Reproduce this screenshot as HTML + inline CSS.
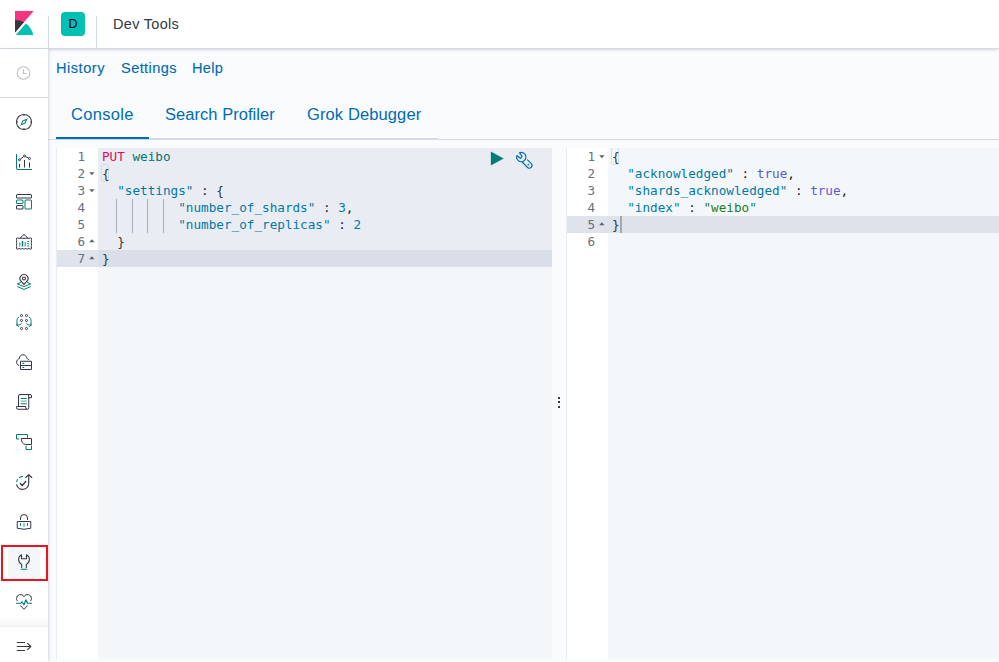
<!DOCTYPE html>
<html lang="en">
<head>
<meta charset="utf-8">
<title>Dev Tools - Kibana</title>
<style>
*{box-sizing:border-box;margin:0;padding:0}
html,body{width:999px;height:662px;overflow:hidden;background:#fafbfd;font-family:"Liberation Sans",sans-serif;color:#343741}
.abs{position:absolute}
#header{position:absolute;left:0;top:0;width:999px;height:49px;background:#fff;border-bottom:1px solid #d3dae6;box-shadow:0 2px 2px -1px rgba(152,162,179,.3),0 1px 5px -2px rgba(152,162,179,.3);z-index:5}
.vsep{position:absolute;top:16px;width:1px;height:32px;background:#d3dae6}
#avatar{position:absolute;left:61px;top:12px;width:24px;height:24px;border-radius:4px;background:#00bfb3;color:#000;font-size:12.5px;font-weight:400;line-height:24px;text-align:center}
#title{position:absolute;left:113px;top:15px;font-size:14px;line-height:18px;letter-spacing:.3px;transform:scaleX(1.035);transform-origin:0 0;white-space:nowrap;color:#343741}
#nav{position:absolute;left:0;top:49px;width:48px;height:613px;background:#fff;box-shadow:2px 0 2px -1px rgba(152,162,179,.3),1px 0 5px -2px rgba(152,162,179,.3);z-index:6}
#nav .hline{position:absolute;left:0;width:48px;height:1px;background:#d3dae6}
.ico{position:absolute;left:16px;width:16px;height:16px;overflow:visible}
#active{position:absolute;left:8px;top:497.5px;width:32px;height:32.5px;border-radius:4px;background:#f3f7fa}
#redbox{position:absolute;left:1px;top:496px;width:47px;height:36px;border:2px solid #ec1220}
#collapse{position:absolute;left:0;top:578px;width:48px;height:35px;background:#fff}#cshadow{position:absolute;left:0;top:564px;width:48px;height:14px;background:linear-gradient(to bottom,rgba(152,162,179,0) 0%,rgba(152,162,179,.02) 40%,rgba(152,162,179,.07) 75%,rgba(152,162,179,.17) 100%)}
.menu{position:absolute;top:58.5px;font-size:14px;line-height:18px;letter-spacing:.5px;transform:scaleX(1.04);transform-origin:0 0;-webkit-text-stroke:.12px #006bb4;color:#006bb4;white-space:nowrap}
.tab{position:absolute;top:104px;font-size:16px;line-height:22px;letter-spacing:.3px;transform:scaleX(1.03);transform-origin:0 0;color:#006bb4;white-space:nowrap}
#tabline1{position:absolute;left:56px;top:138px;width:382px;height:1px;background:#d3dae6}
#tabline2{position:absolute;left:48px;top:139px;width:951px;height:1px;background:#d3dae6}
#tabsel{position:absolute;left:56px;top:137px;width:93px;height:2px;background:#006bb4}
.ed{position:absolute;top:148px;height:511px;background:#f4f7fa;overflow:hidden;font-family:"DejaVu Sans Mono","Liberation Mono",monospace;font-size:12.66px;line-height:17px}
.gut{position:absolute;left:0;top:0;width:42px;height:100%;background:#fff;border-left:1px solid #e8ecf3}
.ln{position:absolute;left:0;width:42px;height:17px;color:#69707d;text-align:right;padding-right:14px;white-space:pre}
.row{position:absolute;left:46px;height:17px;white-space:pre;color:#1a1c21}
.hl{position:absolute;left:0;right:0;height:17px}
.v{color:#0079a5}.m{color:#e00b60}.u{color:#00756c}.k{color:#5a5ad9}.s{color:#1c7c1c}.p{color:#343741}
.fold{position:absolute;width:0;height:0;border-left:2.7px solid transparent;border-right:2.7px solid transparent;margin-left:1.3px}
.fd{border-top:3.2px solid #62656b}
.fu{border-bottom:3.2px solid #62656b}
.guide{position:absolute;width:1px;background:#a9afba}.brk{position:absolute;width:8px;height:17.5px;border:1px solid #d6dbe5;border-radius:3px}
</style>
</head>
<body>
<div id="header">
  <svg class="abs" style="left:12px;top:11px" width="24" height="24" viewBox="0 0 32 32"><polygon fill="#f8337f" points="4 0 4 28.789 28.935 .017"/><path fill="#343741" d="M4,12 L4,28.789 L15.906,15.051 C12.368,13.115 8.317,12 4,12"/><path fill="#00BFB3" d="M18.4789,16.6641 L6.2679,30.7551 L5.1889,31.9991 L28.4399,31.9991 C27.1649,25.7131 23.5519,20.2901 18.4789,16.6641"/></svg>
  <div class="vsep" style="left:48px"></div>
  <div id="avatar">D</div>
  <div class="vsep" style="left:96px"></div>
  <div id="title">Dev Tools</div>
</div>
<div id="nav">
    <svg class="ico" style="top:15.5px" viewBox="0 0 16 16"><g fill="none" stroke="#bbbcc0" stroke-width="1.05"><circle cx="7.5" cy="8" r="6.3"/><path d="M7.5 4.2V8.5H10.5"/></g></svg>
  <div class="hline" style="top:48px"></div>
  <!-- discover -->
  <svg class="ico" style="top:65px" viewBox="0 0 32 32"><path fill="#017d73" d="M8.33 23.67l4.79-10.55 10.55-4.79-4.79 10.55-10.55 4.79zm6.3-9l-2.28 5 5-2.28 2.28-5-5 2.28z"/><path fill="#343741" d="M16 0C7.163 0 0 7.163 0 16s7.163 16 16 16 16-7.163 16-16A16 16 0 0 0 16 0zm1 29.95V28h-2v1.95A14 14 0 0 1 2.05 17H4v-2H2.05A14 14 0 0 1 15 2.05V4h2V2.05A14 14 0 0 1 29.95 15H28v2h1.95A14 14 0 0 1 17 29.95z"/></svg>
  <!-- visualize -->
  <svg class="ico" style="top:105px" viewBox="0 0 32 32"><path fill="#017d73" d="M32 32H4a4 4 0 0 1-4-4V0h2v28a2 2 0 0 0 2 2h28v2z"/><path fill="#343741" d="M6 20h2v7H6zM16 12h2v15h-2zM26 17h2v10h-2z"/><g fill="none" stroke="#343741" stroke-width="2"><circle cx="7" cy="11.5" r="2"/><circle cx="17" cy="4" r="2"/><circle cx="27" cy="9" r="2"/><path d="M8.8 10.2L15.2 5.4M19 5l6.2 3.1"/></g></svg>
  <!-- dashboard -->
  <svg class="ico" style="top:145px" viewBox="0 0 32 32"><path fill="#343741" d="M29 9H3a3 3 0 0 1-3-3V3a3 3 0 0 1 3-3h26a3 3 0 0 1 3 3v3a3 3 0 0 1-3 3zM3 2a1 1 0 0 0-1 1v3a1 1 0 0 0 1 1h26a1 1 0 0 0 1-1V3a1 1 0 0 0-1-1H3z"/><path fill="#017d73" d="M12 20H3a3 3 0 0 1-3-3v-3a3 3 0 0 1 3-3h9a3 3 0 0 1 3 3v3a3 3 0 0 1-3 3zm-9-7a1 1 0 0 0-1 1v3a1 1 0 0 0 1 1h9a1 1 0 0 0 1-1v-3a1 1 0 0 0-1-1H3z"/><path fill="#343741" d="M12 31H3a3 3 0 0 1-3-3v-3a3 3 0 0 1 3-3h9a3 3 0 0 1 3 3v3a3 3 0 0 1-3 3zm-9-7a1 1 0 0 0-1 1v3a1 1 0 0 0 1 1h9a1 1 0 0 0 1-1v-3a1 1 0 0 0-1-1H3z"/><path fill="#017d73" d="M29 31h-9a3 3 0 0 1-3-3V14a3 3 0 0 1 3-3h9a3 3 0 0 1 3 3v14a3 3 0 0 1-3 3zm-9-18a1 1 0 0 0-1 1v14a1 1 0 0 0 1 1h9a1 1 0 0 0 1-1V14a1 1 0 0 0-1-1h-9z"/></svg>
  <!-- canvas -->
  <svg class="ico" style="top:185px" viewBox="0 0 32 32"><g fill="none" stroke="#343741" stroke-width="2" stroke-linejoin="round"><path d="M1 8.5 q1.5 -1.6 3 0 H28 q1.5 -1.6 3 0 V11 q-1.2 1.5 0 3 v3 q-1.2 1.5 0 3 v3 q-1.2 1.5 0 3 V29.5 q-1.5 1.6 -3 0 h-4 q-1.5 1.2 -3 0 h-3.5 q-1.5 1.2 -3 0 h-3.5 q-1.5 1.2 -3 0 H4 q-1.5 1.6 -3 0 V26 q1.2 -1.5 0 -3 v-3 q1.2 -1.5 0 -3 v-3 q1.2 -1.5 0 -3 Z"/><path d="M8 8.5 L14.2 2.3 a2.5 2.5 0 0 1 3.6 0 L24 8.5"/></g><g fill="#017d73"><rect x="6" y="17" width="3" height="8" opacity=".6"/><rect x="11.5" y="14" width="3" height="11"/><rect x="17" y="16" width="3" height="9" opacity=".6"/><rect x="22.5" y="14" width="3.5" height="2"/><rect x="22.5" y="18.5" width="3.5" height="2"/><rect x="22.5" y="23" width="3.5" height="2"/></g></svg>
  <!-- maps -->
  <svg class="ico" style="top:225px" viewBox="0 0 32 32"><g fill="none" stroke="#017d73" stroke-width="2" stroke-linejoin="round"><path d="M9.5 16.8 L2.5 19.8 L16 25.2 L29.5 19.8 L22.5 16.8"/><path d="M2.5 25 L16 30.8 L29.5 25"/></g><g fill="#fff" stroke="#343741" stroke-width="2.2" stroke-linejoin="round"><path d="M16 20.8 L10.04 14.33 A8 8 0 1 1 21.96 14.33 Z"/><circle cx="16" cy="9" r="3" fill="none"/></g></svg>
  <!-- ml -->
  <svg class="ico" style="top:265px" viewBox="0 0 32 32"><g fill="none" stroke="#343741" stroke-width="2"><circle cx="11" cy="3" r="2.1"/><circle cx="21" cy="3" r="2.1"/><circle cx="11" cy="13" r="2.1"/><circle cx="21" cy="13" r="2.1"/><circle cx="11" cy="29" r="2.1"/><circle cx="21" cy="29" r="2.1"/></g><g fill="none" stroke="#017d73" stroke-width="1.9" stroke-linecap="round" stroke-linejoin="round"><path d="M5.5 6.5 Q2 8 2 12 V23 M11 19.5 Q9 22.5 3 22.5 M1.5 20 L2.5 23 L5.5 25.5"/><path d="M26.5 6.5 Q30 8 30 12 V23 M21 19.5 Q23 22.5 29 22.5 M30.5 20 L29.5 23 L26.5 25.5"/></g></svg>
  <!-- infra -->
  <svg class="ico" style="top:305px" viewBox="0 0 32 32"><g fill="none" stroke="#343741" stroke-width="2" stroke-linejoin="round"><path stroke-linecap="round" d="M5.8 23 C3 22 1.2 19.5 1.2 16.5 C1.2 13 3.5 10 6.8 9 C6.5 4.5 10 1.5 14 1.5 C17.5 1.5 20.2 3.5 21.2 7 C21.8 9.3 23.5 10.8 25.7 11.2"/><rect x="9" y="14.5" width="22" height="8.5"/><rect x="9" y="23" width="22" height="8"/></g><g fill="#017d73"><rect x="12.5" y="17.7" width="4" height="2.2" rx="1"/><rect x="12.5" y="26" width="4" height="2.2" rx="1"/></g></svg>
  <!-- logs -->
  <svg class="ico" style="top:345px" viewBox="0 0 32 32"><g fill="none" stroke="#343741" stroke-width="2" stroke-linejoin="round"><path d="M5 25 V4 a3 3 0 0 1 3 -3 H28 M28 1 a3 3 0 0 1 3 3 V7.5 H25.5 M25.5 4 a3 3 0 0 0 -3 -3 M25.5 4 V27.5 a3 3 0 0 1 -3 3 H4 a3 3 0 0 1 -3 -3 V25 H19.5 V27.5 a3 3 0 0 0 3 3"/></g><g fill="#017d73"><rect x="9.5" y="8" width="12" height="2"/><rect x="9.5" y="13" width="12" height="2.5" opacity=".55"/><rect x="9.5" y="18.5" width="12" height="2"/></g></svg>
  <!-- apm -->
  <svg class="ico" style="top:385px" viewBox="0 0 32 32"><g fill="none" stroke-width="2" stroke-linejoin="miter"><path stroke="#017d73" d="M6.5 10 H1 V1 H23 V7.5"/><path stroke="#017d73" d="M20 23 V31 H31 V23"/><path stroke="#343741" d="M10.5 9 H31 V21 H19 Q11 20 10.5 9 Z" stroke-linejoin="round"/></g></svg>
  <!-- uptime -->
  <svg class="ico" style="top:425px" viewBox="0 0 32 32"><g fill="none" stroke-width="2" stroke-linecap="round" stroke-linejoin="round"><path stroke="#343741" stroke-width="2.2" d="M1.3 21.5 A12.3 12.3 0 0 0 25.5 18.7 V2 M19.5 7 L25.5 1.2 L31.5 7"/><path stroke="#343741" stroke-width="2.5" d="M8.5 19 L12.5 23 L19.5 15"/><path stroke="#017d73" stroke-width="2.1" d="M1.4 15.5 Q1.8 13 3 11 M7 7 Q9.5 5.5 13 5.2"/></g></svg>
  <!-- siem -->
  <svg class="ico" style="top:465px" viewBox="0 0 32 32"><g fill="none" stroke="#343741" stroke-width="2" stroke-linejoin="miter"><path d="M9 11 V8 a7 7 0 0 1 14 0 V11" stroke-linecap="round"/><path d="M2.5 15 H29.5 V28.5 Q16 32.5 2.5 28.5 Z"/></g><g fill="#017d73"><rect x="8" y="18" width="2" height="6" rx="1"/><rect x="14.5" y="18" width="3" height="8" opacity=".55"/><rect x="22" y="18" width="2" height="6" rx="1"/></g></svg>
  <!-- devtools -->
  <div id="active"></div>
  <svg class="ico" style="top:505px" viewBox="0 0 32 32"><g fill="none" stroke-width="2.15" stroke-linejoin="round"><path stroke="#343741" d="M11.4 28 V20.8 A10.8 10.8 0 0 1 11.1 1.4 V9.5 H20.9 V1.4 A10.8 10.8 0 0 1 20.6 20.8 V28"/><path stroke="#017d73" stroke-linecap="round" d="M10.5 30.4 H21.5"/></g></svg>
  <div id="redbox"></div>
  <!-- monitoring -->
  <svg class="ico" style="top:545px" viewBox="0 0 32 32"><g fill="none" stroke-width="2" stroke-linecap="round" stroke-linejoin="round"><path stroke="#343741" d="M2.5 13.5 A7.6 7.6 0 0 1 1 9 A8 8 0 0 1 16 5.2 A8 8 0 0 1 31 9 A7.6 7.6 0 0 1 29.5 13.5 M9 23.5 L16 30.5 L23 23.5"/><path stroke="#017d73" stroke-width="2.4" stroke-linecap="butt" d="M0 18.5 H10 L12 15.5 L16 21.5 L20 11.5 L23 18.5 H32"/></g></svg>
  <!-- collapse -->
  <div id="cshadow"></div><div id="collapse"><svg class="abs" style="left:16px;top:12px;overflow:visible" width="16" height="16" viewBox="0 0 16 16"><g fill="none" stroke="#343741" stroke-width="1.1" stroke-linecap="round" stroke-linejoin="round"><path d="M1.2 3.5 H8.6 M1.2 7.5 H14.6 M1.2 11.5 H8.6 M11.6 4.4 L14.8 7.5 L11.6 10.6"/></g></svg></div>

</div>
<div class="menu" style="left:56px">History</div>
<div class="menu" style="left:121px;letter-spacing:.4px">Settings</div>
<div class="menu" style="left:192.3px;letter-spacing:.3px">Help</div>
<div class="tab" style="left:71.3px">Console</div>
<div class="tab" style="left:164.6px;letter-spacing:.05px">Search Profiler</div>
<div class="tab" style="left:307px;letter-spacing:.12px">Grok Debugger</div>
<div id="tabline1"></div><div id="tabline2"></div><div id="tabsel"></div>
<div class="ed" id="ed1" style="left:56px;width:496px">
  <div class="hl" style="top:0;height:119px;background:#e9edf3"></div>
  <div class="hl" style="top:102px;background:#d9dee8"></div>
  <div class="gut">
    <div class="hl" style="top:102px;background:#dfe3ec"></div>
    <div class="ln" style="top:0">1</div>
    <div class="ln" style="top:17px">2</div>
    <div class="ln" style="top:34px">3</div>
    <div class="ln" style="top:51px">4</div>
    <div class="ln" style="top:68px">5</div>
    <div class="ln" style="top:85px">6</div>
    <div class="ln" style="top:102px">7</div>
    <svg class="abs" style="left:32.2px;top:24px" width="6" height="4" viewBox="0 0 6 4"><polygon points="0.2,0.2 5.6,0.2 2.9,3.3" fill="#5f6268"/></svg>
    <svg class="abs" style="left:32.2px;top:41px" width="6" height="4" viewBox="0 0 6 4"><polygon points="0.2,0.2 5.6,0.2 2.9,3.3" fill="#5f6268"/></svg>
    <svg class="abs" style="left:32.2px;top:91px" width="6" height="4" viewBox="0 0 6 4"><polygon points="0.2,3.3 5.6,3.3 2.9,0.2" fill="#5f6268"/></svg>
    <svg class="abs" style="left:32.2px;top:108px" width="6" height="4" viewBox="0 0 6 4"><polygon points="0.2,3.3 5.6,3.3 2.9,0.2" fill="#5f6268"/></svg>
  </div>
  <div class="guide" style="left:60.4px;top:51px;height:34px"></div>
  <div class="guide" style="left:75.8px;top:51px;height:34px"></div>
  <div class="guide" style="left:91.2px;top:51px;height:34px"></div>
  <div class="guide" style="left:106.6px;top:51px;height:34px"></div>
  <div class="row" style="top:0"><span class="m">PUT</span> <span class="u">weibo</span></div>
  <div class="brk" style="left:45px;top:16px"></div><div class="row" style="top:17px"><span class="p">{</span></div>
  <div class="row" style="top:34px">  <span class="v">"settings"</span> : <span class="p">{</span></div>
  <div class="row" style="top:51px">          <span class="v">"number_of_shards"</span> : <span class="v">3</span>,</div>
  <div class="row" style="top:68px">          <span class="v">"number_of_replicas"</span> : <span class="v">2</span></div>
  <div class="row" style="top:85px">  <span class="p">}</span></div>
  <div class="row" style="top:102px"><span class="p">}</span></div>
  <svg class="abs" style="left:434px;top:2.7px" width="14" height="15" viewBox="0 0 14 15"><path d="M1 0.8 L13.4 7.5 L1 14.2 Z" fill="#017d73" stroke="#017d73" stroke-width=".3" stroke-linejoin="round"/></svg>
  <svg class="abs" style="left:459.8px;top:3.7px;overflow:visible" width="16" height="16" viewBox="0 0 16 16"><g fill="none" stroke="#006bb4" stroke-width="1.15" stroke-linejoin="round" stroke-linecap="round"><path d="M3.5 0.8 A4.65 4.65 0 1 1 0.9 3.5 L4.5 6.5 L6.1 4.4 Z"/><path d="M11.5 7.9 L15.4 11.7 A2.7 2.7 0 0 1 11.6 15.5 L6.2 10"/></g><circle cx="12.4" cy="12.5" r="0.85" fill="#006bb4"/></svg>
</div>
<div class="abs" id="grip" style="left:552px;top:148px;width:14px;height:511px">
  <i class="abs" style="left:6px;top:249px;width:2px;height:2px;background:#343741"></i>
  <i class="abs" style="left:6px;top:253px;width:2px;height:2px;background:#343741"></i>
  <i class="abs" style="left:6px;top:258px;width:2px;height:2px;background:#343741"></i>
  
</div>
<div class="ed" id="ed2" style="left:566px;width:433px">
  <div class="hl" style="top:68px;background:#dde2eb"></div>
  <div class="gut">
    <div class="hl" style="top:68px;background:#dfe3ec"></div>
    <div class="ln" style="top:0">1</div>
    <div class="ln" style="top:17px">2</div>
    <div class="ln" style="top:34px">3</div>
    <div class="ln" style="top:51px">4</div>
    <div class="ln" style="top:68px">5</div>
    <div class="ln" style="top:85px">6</div>
    <svg class="abs" style="left:32.2px;top:7px" width="6" height="4" viewBox="0 0 6 4"><polygon points="0.2,0.2 5.6,0.2 2.9,3.3" fill="#5f6268"/></svg>
    <svg class="abs" style="left:32.2px;top:74px" width="6" height="4" viewBox="0 0 6 4"><polygon points="0.2,3.3 5.6,3.3 2.9,0.2" fill="#5f6268"/></svg>
  </div>
  <div class="brk" style="left:45px;top:-1px"></div><div class="row" style="top:0"><span class="p">{</span></div>
  <div class="row" style="top:17px">  <span class="v">"acknowledged"</span> : <span class="k">true</span>,</div>
  <div class="row" style="top:34px">  <span class="v">"shards_acknowledged"</span> : <span class="k">true</span>,</div>
  <div class="row" style="top:51px">  <span class="v">"index"</span> : <span class="s">"weibo"</span></div>
  <div class="row" style="top:68px"><span class="p">}</span></div>
  <div class="abs" style="left:53.7px;top:68px;width:2px;height:17px;background:#a3a7ae"></div>
</div>

</body>
</html>
